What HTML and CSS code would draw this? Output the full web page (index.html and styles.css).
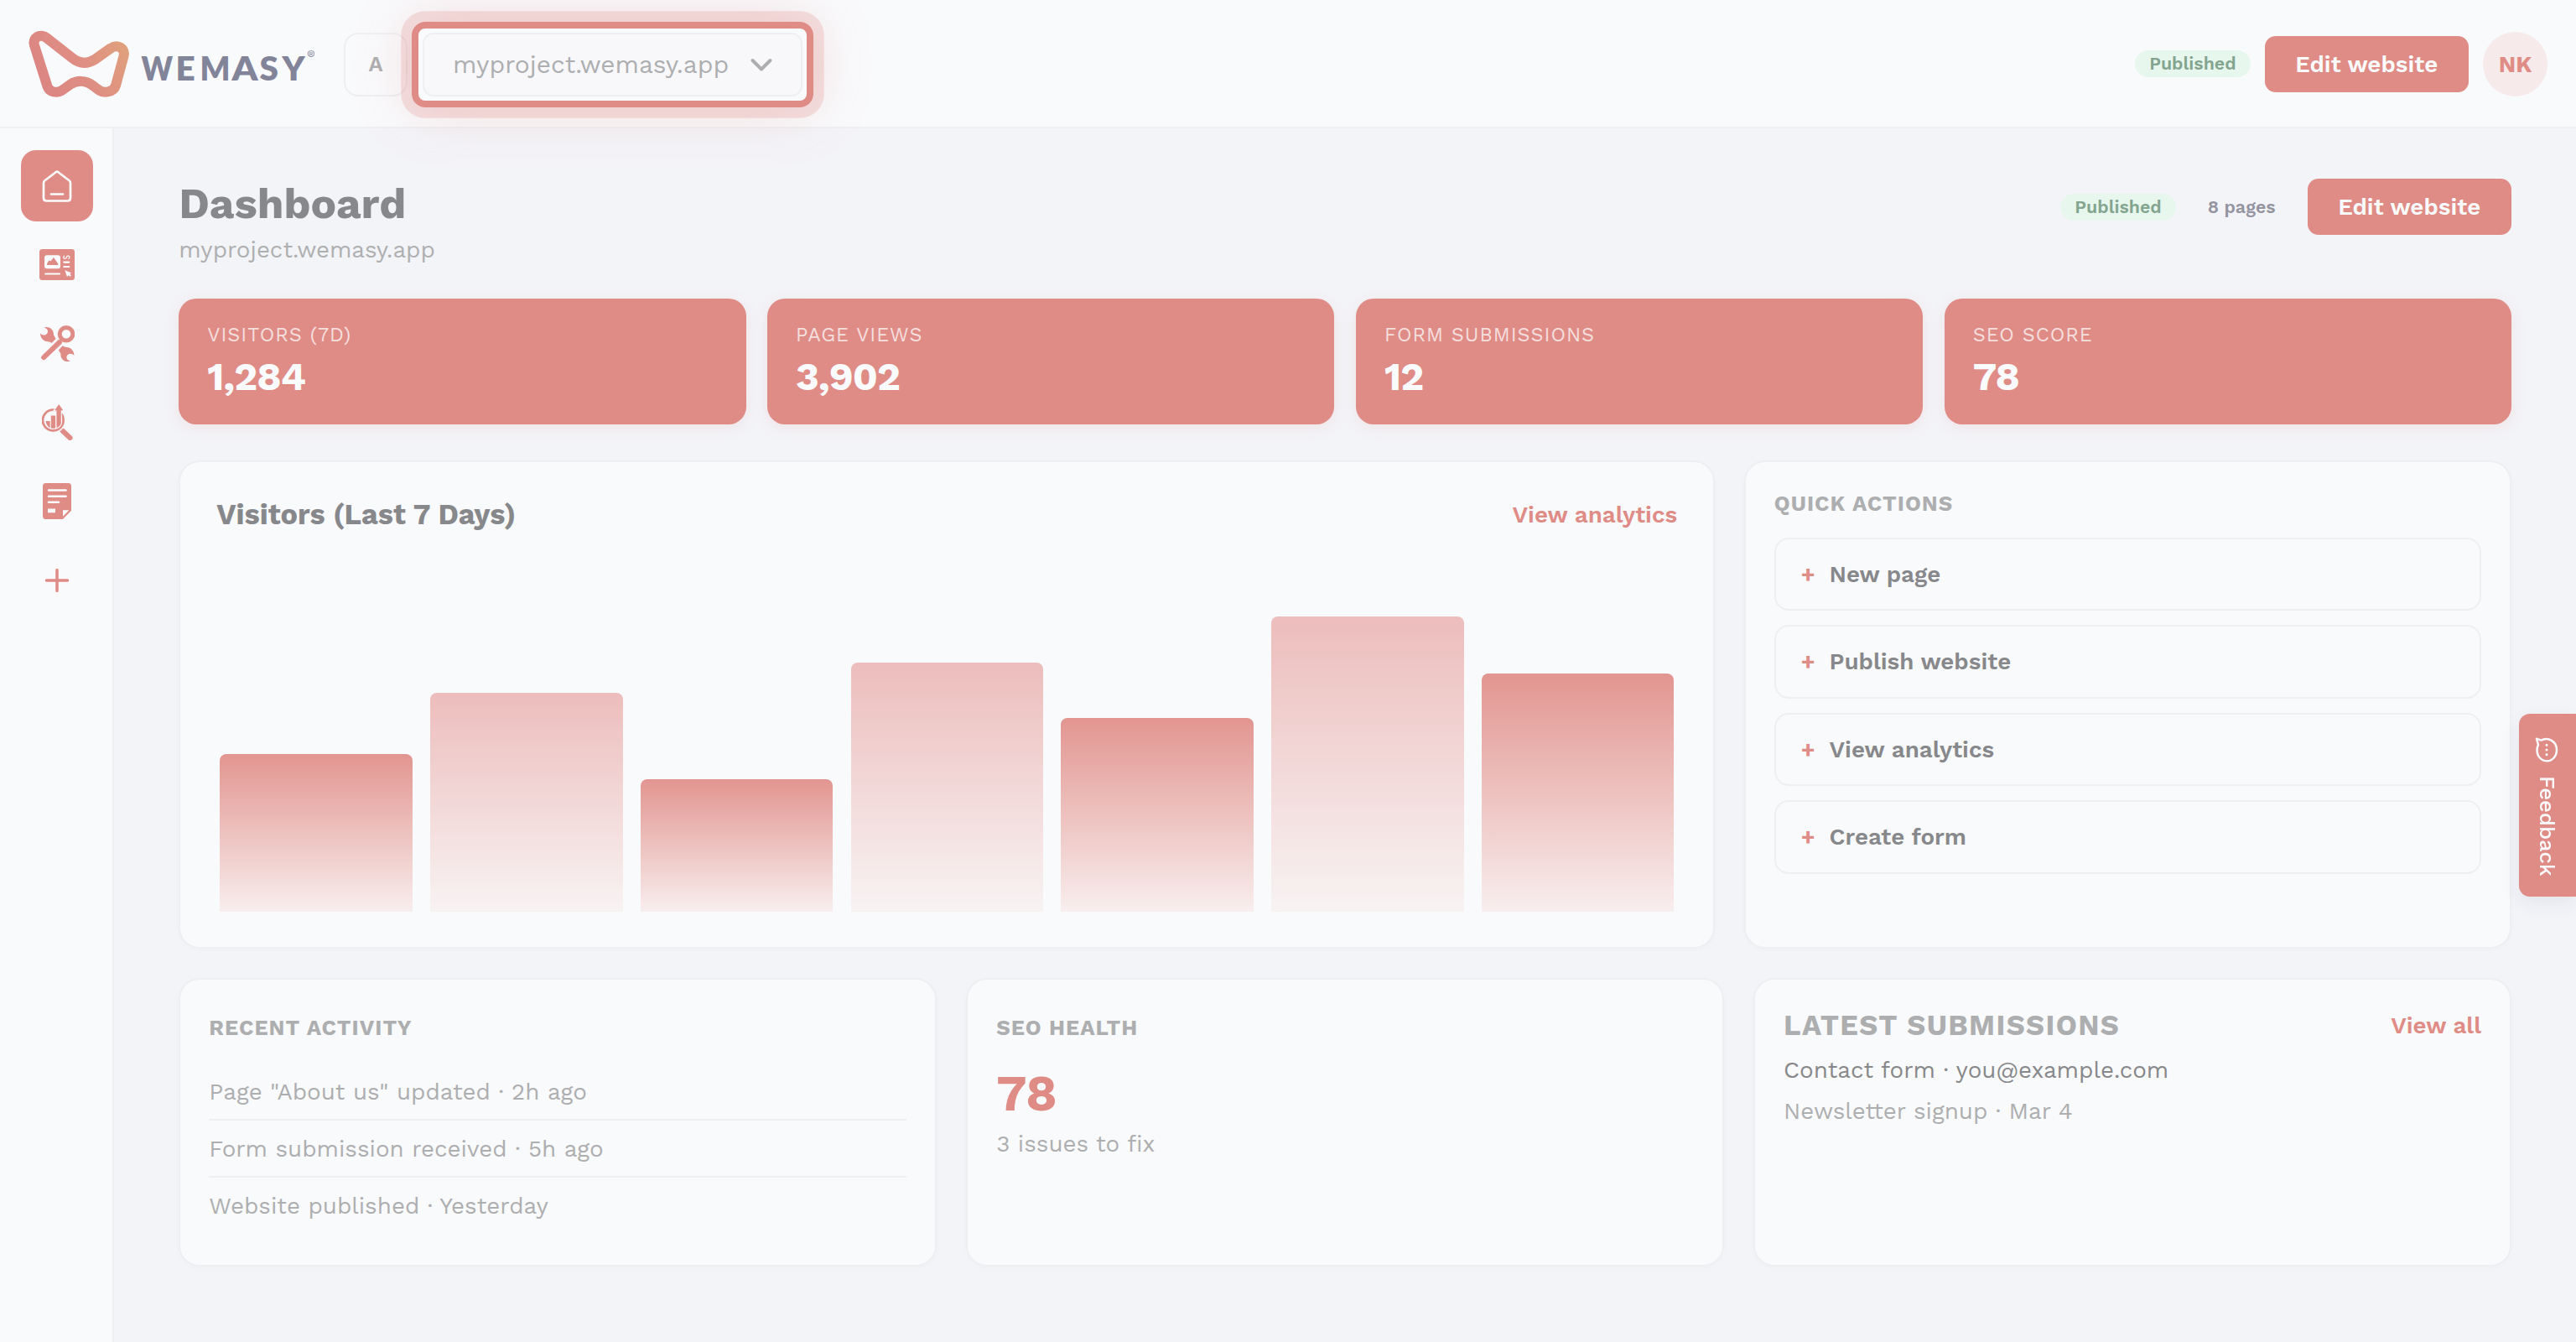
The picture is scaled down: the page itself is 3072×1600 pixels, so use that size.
FILE: index.html
```html
<!DOCTYPE html>
<html lang="en">
  <head>
    <meta charset="UTF-8" />
    <meta name="viewport" content="width=device-width, initial-scale=1" />
    <title>Dashboard - Wemasy</title>
    <link rel="stylesheet" href="styles.css">
  </head>
  <body>
    <header class="topbar">
      <svg class="logo" width="342" height="84" viewBox="33 35 342 84">
        <defs>
          <linearGradient id="mark" gradientUnits="userSpaceOnUse" x1="55" y1="100" x2="150" y2="50">
            <stop offset="0" stop-color="#dc8683" />
            <stop offset="0.45" stop-color="#df8e83" />
            <stop offset="1" stop-color="#e0a17c" />
          </linearGradient>
        </defs>
        <path d="M56 45.5 L86 69 Q99 79.5 113 71 L132 57.5 C141 52 150 58 147.5 67 L138 102 C135.500 110 124 111.500 118 107.500 L110 101.500 C102 95.500 92 95.500 84 100.500 L75 107 C68 112 59 110 56.500 103 L41 54 C38 45 48 39 56 45.500 Z" fill="none" stroke="url(#mark)" stroke-width="12" stroke-linejoin="round" />
        <text class="logo-text" y="96"><tspan x="168.500" textLength="37.500" lengthAdjust="spacingAndGlyphs">W</tspan><tspan x="209.500">E</tspan><tspan x="238.500" textLength="36" lengthAdjust="spacingAndGlyphs">M</tspan><tspan x="276.500" textLength="31" lengthAdjust="spacingAndGlyphs">A</tspan><tspan x="309.500">S</tspan><tspan x="336.500">Y</tspan></text>
        <text class="logo-reg" x="366" y="68">®</text>
      </svg>
      <div class="lang">A</div>
      <div class="site-select">
        <span>myproject.wemasy.app</span>
        <svg width="26" height="16" viewBox="0 0 26 16"><path d="M2.500 3 L13 13.500 L23.500 3" fill="none" stroke="#adaeb0" stroke-width="3.900" stroke-linecap="round" stroke-linejoin="round" /></svg>
      </div>
      <div class="topbar-right">
        <span class="pill pill-green">Published</span>
        <button class="btn">Edit website</button>
        <div class="avatar">NK</div>
      </div>
    </header>

    <div class="layout">
      <nav class="sidebar">
        <a class="nav-item active">
          <svg width="36" height="38" viewBox="0 0 36 38" fill="none" stroke="#fafbfd" stroke-width="2.700" stroke-linecap="round" stroke-linejoin="round">
            <path d="M16.600 2.200 Q18 1.200 19.400 2.200 L32.600 12.300 Q34 13.500 34 15.200 V33 Q34 36.500 30.500 36.500 H5.500 Q2 36.500 2 33 V15.200 Q2 13.500 3.400 12.300 Z" />
            <path d="M11 28.500 H25" />
          </svg>
        </a>
        <a class="nav-item">
          <svg width="42" height="37" viewBox="0 0 42 37">
            <rect width="42" height="37" rx="3.500" fill="#e08c86" />
            <rect x="6" y="7.300" width="19" height="16" rx="3" fill="#fafbfd" />
            <path d="M9 19 V17.500 L11.200 13.500 L13.500 14.300 L17 10 L22.300 17.500 V19 Z" fill="#e08c86" />
            <g fill="none" stroke="#fafbfd" stroke-width="2.200" stroke-linecap="round">
              <path d="M7.200 29.500 H24" />
              <path d="M29.300 15.600 H35.200" />
              <path d="M29.300 21 H35.200" />
              <path d="M29.500 8.200 Q27.600 11 30.300 11.400 Q32 11.400 32.300 9.800 Q32.600 8 34.400 8.200 Q36.900 8.800 35 11.400" stroke-width="1.300" />
            </g>
            <path d="M30.300 25.300 L38 28.200 L36.300 29.700 L38 31.300 L36.600 32.800 L34.600 31.300 L33 33 Z" fill="#fafbfd" />
          </svg>
        </a>
        <a class="nav-item">
          <svg width="41" height="43" viewBox="0 0 41 43" fill="#e08c86">
            <path id="wrench" d="M4.700 2.300 C10 .800 16.300 4 16 11.300 L18.500 16 L13.700 21 C11.500 19 9 19.500 7 19 C2.500 18 0 13.500 0 9.300 C2 12 6 12.500 8.300 9.500 C10 6.500 8.500 4 4.700 2.300 Z" />
            <use href="#wrench" transform="rotate(180 20.200 22.600)" />
            <path d="M24 19 L4.200 38.200" fill="none" stroke="#fafbfd" stroke-width="8" />
            <path d="M23 20 L4.200 38.200" fill="none" stroke="#e08c86" stroke-width="6" stroke-linecap="round" />
            <circle cx="31" cy="10.300" r="7.800" fill="none" stroke="#e08c86" stroke-width="5" />
          </svg>
        </a>
        <a class="nav-item">
          <svg width="37" height="43" viewBox="0 0 37 43" fill="#e08c86">
            <circle cx="13.300" cy="19" r="12.300" fill="none" stroke="#e08c86" stroke-width="2.800" />
            <path d="M4.500 20 H9.700 V28 Q5.500 26 4.500 20 Z" />
            <path d="M10.800 13.500 H16.300 V28.300 Q13 29.300 10.800 28.300 Z" />
            <path d="M20.200 0 L25.300 7.200 H22.800 V23 Q21.500 27 17.400 28 V7.200 H15.100 Z" stroke="#fafbfd" stroke-width="2.200" paint-order="stroke" />
            <path d="M24.500 31.500 L33.500 40" fill="none" stroke="#e08c86" stroke-width="6" stroke-linecap="round" />
            <path d="M21.500 31.500 L25.500 27.500" fill="none" stroke="#fafbfd" stroke-width="1.200" />
          </svg>
        </a>
        <a class="nav-item">
          <svg width="34" height="43" viewBox="0 0 34 43">
            <path d="M3.500 0 H30.500 Q34 0 34 3.500 V32.800 L24 43 H3.500 Q0 43 0 39.500 V3.500 Q0 0 3.500 0 Z" fill="#e08c86" />
            <g stroke="#fafbfd" stroke-width="2.500" stroke-linecap="round">
              <path d="M7 8.500 H27.500" />
              <path d="M7 15.800 H27.500" />
              <path d="M7 22.800 H19" />
            </g>
            <rect x="6" y="30.500" width="9" height="4.800" fill="#fafbfd" />
            <path d="M24 32.300 H31.300 L24 39.800 Z" fill="#fafbfd" />
          </svg>
        </a>
        <a class="nav-item">
          <svg width="30" height="30" viewBox="0 0 30 30"><path d="M15 2.500 V27.500 M2.500 15 H27.500" stroke="#e08c86" stroke-width="3.500" stroke-linecap="round" /></svg>
        </a>
      </nav>

      <main class="main">
        <div class="page-head">
          <div>
            <h1>Dashboard</h1>
            <p class="domain">myproject.wemasy.app</p>
          </div>
          <div class="page-actions">
            <span class="pill pill-green">Published</span>
            <span class="pill">8 pages</span>
            <button class="btn">Edit website</button>
          </div>
        </div>

        <div class="stats">
          <div class="stat"><div class="stat-label">Visitors (7d)</div><div class="stat-value">1,284</div></div>
          <div class="stat"><div class="stat-label">Page views</div><div class="stat-value">3,902</div></div>
          <div class="stat"><div class="stat-label">Form submissions</div><div class="stat-value">12</div></div>
          <div class="stat"><div class="stat-label">SEO score</div><div class="stat-value">78</div></div>
        </div>

        <div class="row-main">
          <section class="card chart-card">
            <div class="card-head">
              <h2>Visitors (Last 7 Days)</h2>
              <a class="link">View analytics</a>
            </div>
            <div class="chart">
              <div class="bar" style="height: 188px"></div>
              <div class="bar" style="height: 261px"></div>
              <div class="bar" style="height: 158px"></div>
              <div class="bar" style="height: 297px"></div>
              <div class="bar" style="height: 231px"></div>
              <div class="bar" style="height: 352px"></div>
              <div class="bar" style="height: 284px"></div>
            </div>
          </section>

          <section class="card quick-card">
            <h3>Quick actions</h3>
            <div class="actions">
              <a class="action"><b>+</b>New page</a>
              <a class="action"><b>+</b>Publish website</a>
              <a class="action"><b>+</b>View analytics</a>
              <a class="action"><b>+</b>Create form</a>
            </div>
          </section>
        </div>

        <div class="row-bottom">
          <section class="card small-card">
            <h3>Recent activity</h3>
            <ul class="activity">
              <li>Page "About us" updated · 2h ago</li>
              <li>Form submission received · 5h ago</li>
              <li>Website published · Yesterday</li>
            </ul>
          </section>

          <section class="card small-card">
            <h3>SEO health</h3>
            <div class="score">78</div>
            <p class="muted">3 issues to fix</p>
          </section>

          <section class="card small-card latest-card">
            <div class="card-head">
              <h3>Latest submissions</h3>
              <a class="link">View all</a>
            </div>
            <p class="submission">Contact form · you@example.com</p>
            <p class="submission muted">Newsletter signup · Mar 4</p>
          </section>
        </div>
      </main>
    </div>

    <div class="feedback">
      <svg width="28" height="30" viewBox="0 0 28 30" fill="none" stroke="#fafbfd" stroke-width="2.500" stroke-linejoin="round">
        <path d="M2 1.800 L7.400 3.600 C16 -1 26 5 26 15 C26 22.500 21 28.300 14.300 28.300 C7.500 28.300 2.500 22.500 2.500 15.500 C2.500 13 3 11 4 9.200 Z" />
        <path d="M14 9.200 V9.300 M14 14.900 V15 M14 20.600 V20.700" stroke-width="3" stroke-linecap="round" />
      </svg>
      <span>Feedback</span>
    </div>
  </body>
</html>
```
FILE: styles.css
```css
/* Base styles */
* {
  box-sizing: border-box;
}

body {
  margin: 0;
  font-family: "Work Sans", Inter, sans-serif;
  font-size: 27.73px;
  line-height: 41px;
  background: #f3f4f8;
  color: #87888b;
}

h1,
h2,
h3,
p,
ul {
  margin: 0;
  padding: 0;
}

/* Top bar */
.topbar {
  display: flex;
  align-items: center;
  height: 153px;
  padding: 2px 34px 0 33px;
  background: #f9fafc;
  border-bottom: 2px solid #eeeff1;
}

.logo-text {
  font-family: Lato, sans-serif;
  font-weight: 800;
  font-size: 40.5px;
  fill: #82849a;
}

.logo-reg {
  font-size: 12px;
  fill: #82849a;
}

.lang {
  display: flex;
  align-items: center;
  justify-content: center;
  width: 76px;
  height: 76px;
  margin-left: 35px;
  border: 2px solid #eeeff1;
  border-radius: 17px;
  background: #f9fafc;
  color: #adaeb0;
  font-size: 25.6px;
  font-weight: 600;
}

.site-select {
  position: relative;
  display: flex;
  align-items: center;
  gap: 25.6px;
  height: 76px;
  margin-left: 18px;
  padding: 0 34px;
  border: 2px solid #eeeff1;
  border-radius: 13px;
  background: #f8f8fb;
  color: #adaeb0;
  font-size: 29.87px;
}

/* Highlight ring round the site selector */
.site-select::after {
  content: "";
  position: absolute;
  inset: -15px;
  border: 8px solid #e08c86;
  border-radius: 16px;
  box-shadow: 0 0 0 12.75px rgba(224, 140, 134, 0.24), 0 0 68px rgba(224, 140, 134, 0.3);
}

.topbar-right {
  display: flex;
  align-items: center;
  gap: 17px;
  margin-left: auto;
}

.pill {
  padding: 0 17px;
  border-radius: 17px;
  font-size: 21.33px;
  font-weight: 600;
  line-height: 32px;
  color: #9394a0;
}

.pill-green {
  background: #e7f7ee;
  color: #83a58f;
}

.btn {
  height: 67px;
  padding: 0 36.7px;
  border: none;
  border-radius: 12.8px;
  background: #e08c86;
  color: #fafbfd;
  font-family: inherit;
  font-size: 27.73px;
  font-weight: 600;
}

.topbar .pill,
.topbar .btn {
  margin-bottom: 1px;
}

.avatar {
  display: flex;
  align-items: center;
  justify-content: center;
  width: 77px;
  height: 77px;
  border-radius: 50%;
  background: #f6eaea;
  color: #e08c86;
  font-size: 27.73px;
  font-weight: 700;
}

/* Layout */
.layout {
  display: flex;
  height: 1447px;
}

.sidebar {
  display: flex;
  flex-direction: column;
  gap: 9px;
  width: 136px;
  padding: 26px 0 0 25px;
  background: #f9fafc;
  border-right: 2px solid #eeeff1;
}

.nav-item {
  display: flex;
  align-items: center;
  justify-content: center;
  width: 86px;
  height: 85px;
  border-radius: 18px;
}

.nav-item.active {
  background: #e08c86;
}

.main {
  flex: 1;
  padding: 60px 77px 0 77.3px;
}

.page-head {
  display: flex;
  justify-content: space-between;
  align-items: flex-start;
  margin-bottom: 38px;
}

h1 {
  font-size: 51.2px;
  font-weight: 700;
  line-height: 59px;
}

.domain {
  margin-top: 5px;
  color: #aeafb0;
}

.page-actions {
  display: flex;
  align-items: center;
  gap: 21px;
}

/* Stats */
.stats {
  display: grid;
  grid-template-columns: repeat(4, 1fr);
  gap: 25.6px;
  margin-bottom: 43px;
}

.stat {
  height: 150px;
  padding: 26px 34px;
  border-radius: 21px;
  background: #e08c86;
  color: #fafbfd;
  box-shadow: 0 4px 17px rgba(224, 140, 134, 0.16);
}

.stat-label {
  font-size: 23.47px;
  line-height: 35px;
  letter-spacing: 0.04em;
  text-transform: uppercase;
  color: #f4dfdf;
}

.stat-value {
  margin-top: 4px;
  font-size: 46.93px;
  font-weight: 700;
  line-height: 56px;
  letter-spacing: -0.02em;
}

/* Cards */
.card {
  border: 2px solid #eeeff1;
  border-radius: 25px;
  background: #f9fafc;
  box-shadow: 0 2px 6px rgba(0, 0, 0, 0.02);
}

.card-head {
  display: flex;
  justify-content: space-between;
  align-items: center;
}

h2 {
  font-size: 34.13px;
  font-weight: 700;
}

h3 {
  font-size: 25.6px;
  font-weight: 700;
  line-height: 38px;
  letter-spacing: 0.04em;
  text-transform: uppercase;
  color: #adaeb0;
}

.link {
  color: #e08c86;
  font-weight: 600;
}

.row-main {
  display: grid;
  grid-template-columns: 1832px 1fr;
  gap: 34.5px;
  height: 582px;
  margin-bottom: 35px;
}

/* Bar chart */
.chart-card {
  display: flex;
  flex-direction: column;
  padding: 42px 43px;
}

.chart {
  flex: 1;
  display: flex;
  align-items: flex-end;
  gap: 21.3px;
  padding: 0 4px;
}

.bar {
  flex: 1;
  border-radius: 8px 8px 0 0;
  background: linear-gradient(#e29590, #f8eeee);
}

.bar:nth-child(even) {
  background: linear-gradient(#ecbdbc, #f8f3f3);
}

/* Quick actions */
.quick-card {
  padding: 30px 34px;
}

.actions {
  display: flex;
  flex-direction: column;
  gap: 17px;
  margin-top: 21.5px;
}

.action {
  display: flex;
  align-items: center;
  gap: 17px;
  height: 87.5px;
  padding: 0 30px;
  border: 2px solid #eeeff1;
  border-radius: 17px;
  font-weight: 600;
}

.action b {
  color: #e08c86;
  font-weight: 700;
}

/* Bottom row */
.row-bottom {
  display: grid;
  grid-template-columns: repeat(3, 1fr);
  gap: 35px;
  height: 340px;
}

.small-card {
  padding: 38px 34px;
}

.activity {
  margin-top: 24px;
  list-style: none;
  color: #adaeb0;
}

.activity li {
  padding: 13px 0 12px;
  border-bottom: 2px solid #eeeff1;
}

.activity li:last-child {
  border-bottom: none;
}

.score {
  margin-top: 24px;
  color: #e08c86;
  font-size: 59.73px;
  font-weight: 700;
  line-height: 71px;
}

.muted {
  margin-top: 4px;
  color: #adaeb0;
}

.latest-card {
  padding-top: 34px;
}

.latest-card h3 {
  font-size: 34.13px;
  line-height: 41px;
}

.submission {
  margin-top: 12px;
}

.submission.muted {
  margin-top: 8px;
}

/* Feedback tab */
.feedback {
  position: fixed;
  top: 851px;
  right: 0;
  display: flex;
  align-items: center;
  gap: 16px;
  width: 68px;
  height: 218px;
  padding: 28px 2px 0 0;
  border-radius: 13px 0 0 13px;
  background: #e08c86;
  color: #fafbfd;
  font-size: 25.6px;
  font-weight: 500;
  writing-mode: vertical-rl;
  box-shadow: 0 8px 25px rgba(40, 40, 80, 0.07);
}
```
